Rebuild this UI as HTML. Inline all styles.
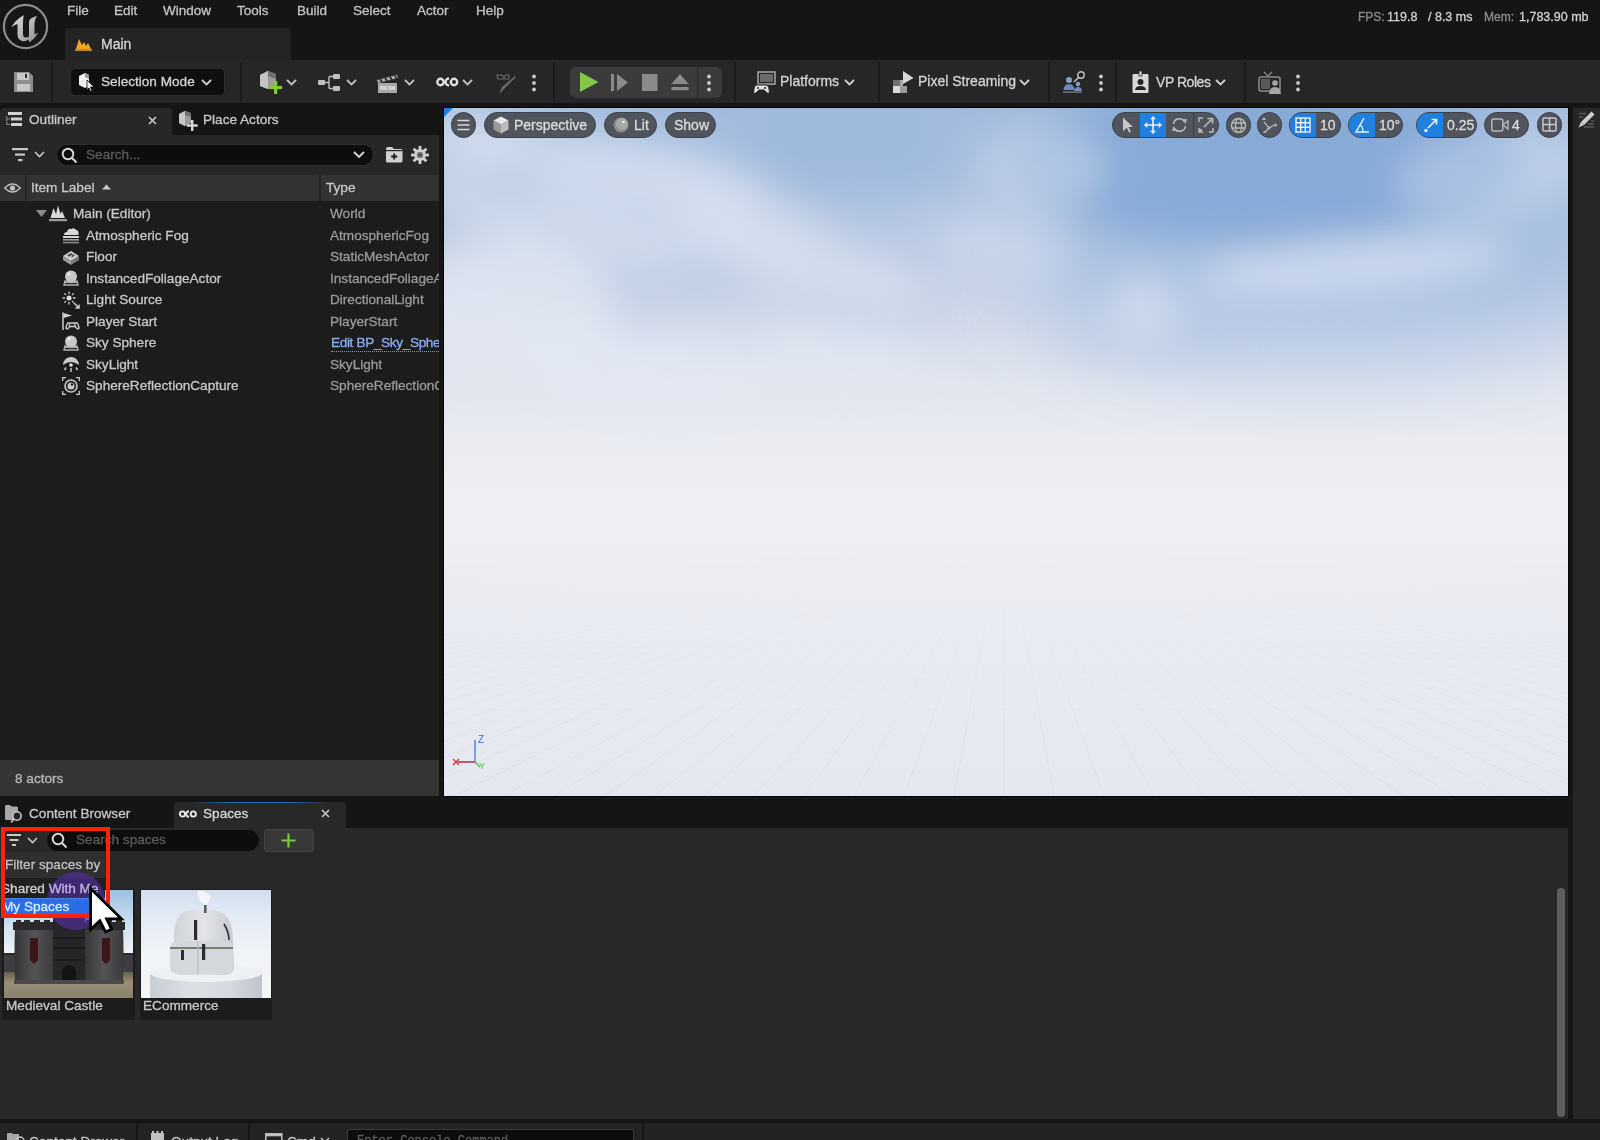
<!DOCTYPE html>
<html><head><meta charset="utf-8">
<style>
*{box-sizing:border-box;margin:0;padding:0}
html,body{width:1600px;height:1140px;overflow:hidden;background:#151515;font-family:"Liberation Sans",sans-serif;color:#c0c0c0}
.a{position:absolute}
.t{position:absolute;white-space:nowrap;line-height:1;-webkit-text-stroke:0.3px currentColor;will-change:transform}
svg{position:absolute;overflow:visible}
</style></head><body>

<!-- ===== MENU BAR ===== -->
<div class="a" style="left:0;top:0;width:1600px;height:60px;background:#151515"></div>
<!-- UE logo -->
<svg style="left:2px;top:3px" width="47" height="47" viewBox="0 0 47 47">
  <defs><linearGradient id="ug" x1="0" y1="0" x2="1" y2="1"><stop offset="0" stop-color="#dcdcdc"/><stop offset="0.55" stop-color="#b4b4b4"/><stop offset="1" stop-color="#8a8a8a"/></linearGradient></defs>
  <circle cx="23.5" cy="23.5" r="21.6" fill="#161616" stroke="#8c8c8c" stroke-width="2.2"/>
  <path d="M9.5 24.5 Q12 18.5 19.5 13.5 L22 12.3 Q21 15 21 19 V31 Q21 34.5 24 34.5 Q25.5 34.5 27 33.5 V19 Q27 17 29.5 15 L35 12.8 Q33 16 32.5 20 V31.5 L36.5 29.5 Q33 35.5 27.5 39.5 L26.5 36.5 Q23.5 39 20 38 Q15.5 36.5 15.5 31.5 V21 Q12 21.5 9.5 24.5 Z" fill="url(#ug)"/>
</svg>
<div class="t" style="left:67px;top:4px;font-size:13.5px;color:#c4c4c4">File</div>
<div class="t" style="left:114px;top:4px;font-size:13.5px;color:#c4c4c4">Edit</div>
<div class="t" style="left:163px;top:4px;font-size:13.5px;color:#c4c4c4">Window</div>
<div class="t" style="left:237px;top:4px;font-size:13.5px;color:#c4c4c4">Tools</div>
<div class="t" style="left:297px;top:4px;font-size:13.5px;color:#c4c4c4">Build</div>
<div class="t" style="left:353px;top:4px;font-size:13.5px;color:#c4c4c4">Select</div>
<div class="t" style="left:417px;top:4px;font-size:13.5px;color:#c4c4c4">Actor</div>
<div class="t" style="left:476px;top:4px;font-size:13.5px;color:#c4c4c4">Help</div>

<!-- FPS -->
<div class="t" style="left:1358px;top:11px;font-size:12px;color:#8c8c8c">FPS:</div>
<div class="t" style="left:1387px;top:11px;font-size:12.5px;color:#d2d2d2">119.8</div>
<div class="t" style="left:1428px;top:11px;font-size:12.5px;color:#d2d2d2">/ 8.3 ms</div>
<div class="t" style="left:1484px;top:11px;font-size:12px;color:#8c8c8c">Mem:</div>
<div class="t" style="left:1519px;top:11px;font-size:12.5px;color:#d2d2d2">1,783.90 mb</div>

<!-- Main tab -->
<div class="a" style="left:65px;top:28px;width:226px;height:33px;background:#242424;border-radius:4px 4px 0 0"></div>
<svg style="left:74px;top:37px" width="20" height="16" viewBox="0 0 20 16">
  <path d="M2 12 L5 2 L8 8 L10 5 L12 9 L14 6 L17 12 Z" fill="#f2a81c"/>
  <rect x="1" y="12" width="17" height="2" fill="#b98a3a"/>
</svg>
<div class="t" style="left:101px;top:37px;font-size:14px;color:#d6d6d6">Main</div>

<!-- ===== TOOLBAR ===== -->
<div class="a" style="left:0;top:60px;width:1600px;height:43px;background:#262626"></div>
<!-- separators -->
<div class="a" style="left:51px;top:62px;width:2px;height:40px;background:#1b1b1b"></div>
<div class="a" style="left:240px;top:62px;width:2px;height:40px;background:#1b1b1b"></div>
<div class="a" style="left:553px;top:62px;width:2px;height:40px;background:#1b1b1b"></div>
<div class="a" style="left:734px;top:62px;width:2px;height:40px;background:#1b1b1b"></div>
<div class="a" style="left:878px;top:62px;width:2px;height:40px;background:#1b1b1b"></div>
<div class="a" style="left:1048px;top:62px;width:2px;height:40px;background:#1b1b1b"></div>
<div class="a" style="left:1115px;top:62px;width:2px;height:40px;background:#1b1b1b"></div>
<div class="a" style="left:1244px;top:62px;width:2px;height:40px;background:#1b1b1b"></div>
<!-- save -->
<svg style="left:14px;top:72px" width="20" height="20" viewBox="0 0 20 20">
  <path d="M0 0 H15 L19 4 V20 H0 Z" fill="#8e8e8e"/>
  <rect x="3" y="1" width="12" height="7" fill="#c8c8c8"/>
  <rect x="11" y="2" width="2" height="4" fill="#333"/>
  <rect x="3" y="12" width="13" height="7" fill="#c8c8c8"/>
</svg>
<!-- selection mode -->
<div class="a" style="left:70px;top:68px;width:155px;height:28px;background:#0f0f0f;border-radius:5px;border:1px solid #2c2c2c"></div>
<svg style="left:78px;top:73px" width="18" height="19" viewBox="0 0 18 19">
  <path d="M1 3 L7 0 L11 2 L11 13 L7 15 L1 12 Z" fill="#f0f0f0"/>
  <path d="M7 0 L11 2 L11 6 L7 4 Z" fill="#9a9a9a"/>
  <path d="M9 7 L16 14 L12.5 14 L14 18 L12.5 18.6 L11 15 L9 17 Z" fill="#f0f0f0" stroke="#0f0f0f" stroke-width="0.8"/>
</svg>
<div class="t" style="left:101px;top:74.5px;font-size:13.6px;color:#d4d4d4">Selection Mode</div>
<svg style="left:201px;top:79px" width="11" height="7" viewBox="0 0 11 7"><path d="M1 1 L5.5 5.5 L10 1" fill="none" stroke="#d0d0d0" stroke-width="1.8"/></svg>

<!-- place actors -->
<svg style="left:259px;top:71px" width="24" height="23" viewBox="0 0 24 23">
  <path d="M1 4 L9 0 L17 3 L17 14 L9 18 L1 15 Z" fill="#9c9c9c"/>
  <path d="M1 4 L9 0 L9 18 L1 15 Z" fill="#c4c4c4"/>
  <path d="M9 0 L17 3 L17 8 L9 5 Z" fill="#6e6e6e"/>
  <rect x="15" y="10" width="3.2" height="13" fill="#7ccc3c"/>
  <rect x="10.1" y="14.9" width="13" height="3.2" fill="#7ccc3c"/>
</svg>
<svg style="left:286px;top:79px" width="11" height="7" viewBox="0 0 11 7"><path d="M1 1 L5.5 5.5 L10 1" fill="none" stroke="#c0c0c0" stroke-width="1.8"/></svg>
<!-- hierarchy -->
<svg style="left:318px;top:74px" width="23" height="17" viewBox="0 0 23 17">
  <rect x="0" y="6" width="7" height="5" rx="1" fill="#c0c0c0"/>
  <rect x="15" y="0" width="7" height="5" rx="1" fill="#c0c0c0"/>
  <rect x="15" y="12" width="7" height="5" rx="1" fill="#c0c0c0"/>
  <path d="M7 8.5 H11 M11 2.5 V14.5 M11 2.5 H15 M11 14.5 H15" stroke="#c0c0c0" stroke-width="1.4" fill="none"/>
</svg>
<svg style="left:346px;top:79px" width="11" height="7" viewBox="0 0 11 7"><path d="M1 1 L5.5 5.5 L10 1" fill="none" stroke="#c0c0c0" stroke-width="1.8"/></svg>
<!-- clapper -->
<svg style="left:377px;top:71px" width="22" height="22" viewBox="0 0 22 22">
  <path d="M0 9 L20 4 L21 7 L1 12 Z" fill="#a8a8a8"/>
  <path d="M3 8 L5 11 M8 7 L10 10 M13 6 L15 9 M18 5 L20 8" stroke="#242424" stroke-width="1.5"/>
  <rect x="1" y="12" width="19" height="10" fill="#a8a8a8"/>
  <rect x="3" y="15" width="7" height="4" fill="#d0d0d0"/>
  <rect x="11" y="15" width="7" height="4" fill="#d0d0d0"/>
</svg>
<svg style="left:404px;top:79px" width="11" height="7" viewBox="0 0 11 7"><path d="M1 1 L5.5 5.5 L10 1" fill="none" stroke="#c0c0c0" stroke-width="1.8"/></svg>
<!-- oco -->
<svg style="left:436px;top:75px" width="23" height="14" viewBox="0 0 23 14">
  <circle cx="4.5" cy="7" r="3.2" fill="none" stroke="#e0e0e0" stroke-width="2.4"/>
  <path d="M13 3.5 A3.5 3.5 0 1 0 13 10.5" fill="none" stroke="#e0e0e0" stroke-width="2.4"/>
  <circle cx="18" cy="7" r="3.2" fill="none" stroke="#e0e0e0" stroke-width="2.4"/>
  <path d="M8 7 H10" stroke="#e0e0e0" stroke-width="2"/>
</svg>
<svg style="left:462px;top:79px" width="11" height="7" viewBox="0 0 11 7"><path d="M1 1 L5.5 5.5 L10 1" fill="none" stroke="#c0c0c0" stroke-width="1.8"/></svg>
<!-- brush -->
<svg style="left:496px;top:73px" width="22" height="20" viewBox="0 0 22 20">
  <path d="M1 2 H6 L8 4 L10 2 H13 V6 H9 L8 5 L7 6 H2 Z" fill="none" stroke="#6a6a6a" stroke-width="1.2"/>
  <path d="M20 4 L8 16 Q6 19 3 20 Q5 17 6 14 L19 3 Z" fill="#6a6a6a"/>
</svg>
<svg style="left:531px;top:74px" width="6" height="18" viewBox="0 0 6 18"><circle cx="3" cy="2.5" r="1.9" fill="#c8c8c8"/><circle cx="3" cy="9" r="1.9" fill="#c8c8c8"/><circle cx="3" cy="15.5" r="1.9" fill="#c8c8c8"/></svg>

<!-- play group -->
<div class="a" style="left:570px;top:67px;width:152px;height:31px;background:#3b3b3b;border-radius:6px"></div>
<div class="a" style="left:697px;top:67px;width:1px;height:31px;background:#2a2a2a"></div>
<svg style="left:580px;top:72px" width="19" height="20" viewBox="0 0 19 20"><path d="M0 0 L18.5 10 L0 20 Z" fill="#84c84a"/></svg>
<svg style="left:611px;top:74px" width="18" height="17" viewBox="0 0 18 17"><rect x="0" y="0" width="3" height="17" fill="#8a8a8a"/><path d="M6 0 L17 8.5 L6 17 Z" fill="#8a8a8a"/></svg>
<svg style="left:642px;top:74px" width="16" height="17" viewBox="0 0 16 17"><rect x="0" y="0" width="15.5" height="17" fill="#8a8a8a"/></svg>
<svg style="left:671px;top:74px" width="18" height="17" viewBox="0 0 18 17"><path d="M9 0 L17.5 10 H0.5 Z" fill="#8a8a8a"/><rect x="0.5" y="13" width="17" height="3.2" fill="#8a8a8a"/></svg>
<svg style="left:706px;top:74px" width="6" height="18" viewBox="0 0 6 18"><circle cx="3" cy="2.5" r="1.9" fill="#c8c8c8"/><circle cx="3" cy="9" r="1.9" fill="#c8c8c8"/><circle cx="3" cy="15.5" r="1.9" fill="#c8c8c8"/></svg>

<!-- platforms -->
<svg style="left:753px;top:72px" width="24" height="22" viewBox="0 0 24 22">
  <rect x="5" y="0" width="17" height="12" fill="none" stroke="#a0a0a0" stroke-width="1.6"/>
  <rect x="7" y="2" width="13" height="8" fill="#6a6a6a"/>
  <path d="M3 13 Q1 14 0.5 20 Q1 22 3 21 L6 18 H11 L14 21 Q16 22 16.5 20 Q16 14 14 13 Z" fill="#e0e0e0" stroke="#242424" stroke-width="1"/>
  <circle cx="5" cy="16" r="1" fill="#242424"/><circle cx="12" cy="16" r="1" fill="#242424"/>
</svg>
<div class="t" style="left:780px;top:74px;font-size:14px;color:#d4d4d4">Platforms</div>
<svg style="left:844px;top:79px" width="11" height="7" viewBox="0 0 11 7"><path d="M1 1 L5.5 5.5 L10 1" fill="none" stroke="#d0d0d0" stroke-width="1.8"/></svg>

<!-- pixel streaming -->
<svg style="left:893px;top:71px" width="21" height="22" viewBox="0 0 21 22">
  <path d="M10 0 L20.5 7 L10 13 Z" fill="#d8d8d8"/>
  <rect x="0" y="9" width="7" height="7" fill="#6e6e6e"/>
  <rect x="0" y="15" width="7" height="7" fill="#d8d8d8"/>
  <rect x="7" y="15" width="7" height="7" fill="#9a9a9a"/>
  <rect x="7" y="9" width="3" height="6" fill="#a8a8a8"/>
</svg>
<div class="t" style="left:918px;top:74px;font-size:14px;color:#d4d4d4">Pixel Streaming</div>
<svg style="left:1019px;top:79px" width="11" height="7" viewBox="0 0 11 7"><path d="M1 1 L5.5 5.5 L10 1" fill="none" stroke="#d0d0d0" stroke-width="1.8"/></svg>

<!-- multiuser -->
<svg style="left:1063px;top:71px" width="23" height="22" viewBox="0 0 23 22">
  <circle cx="6" cy="9" r="3" fill="#8aa0c8"/>
  <path d="M0.5 19 Q1 13 6 13 Q11 13 11.5 19 Z" fill="#6e8ac0"/>
  <circle cx="15" cy="13" r="2.2" fill="#8aa0c8"/>
  <path d="M11 20 Q11.5 16 15 16 Q18.5 16 19 20 Z" fill="#6e8ac0"/>
  <circle cx="18" cy="4" r="3.2" fill="none" stroke="#c8c8c8" stroke-width="1.4"/>
  <path d="M15.5 6.5 L11 11" stroke="#c8c8c8" stroke-width="1.4"/>
  <rect x="0" y="20.5" width="19" height="1.2" fill="#8a8a8a"/>
</svg>
<svg style="left:1098px;top:74px" width="6" height="18" viewBox="0 0 6 18"><circle cx="3" cy="2.5" r="1.9" fill="#c8c8c8"/><circle cx="3" cy="9" r="1.9" fill="#c8c8c8"/><circle cx="3" cy="15.5" r="1.9" fill="#c8c8c8"/></svg>

<!-- vp roles -->
<svg style="left:1132px;top:71px" width="17" height="22" viewBox="0 0 17 22">
  <rect x="0.5" y="3" width="16" height="19" rx="1" fill="#d8d8d8"/>
  <rect x="7" y="0" width="3" height="5" fill="#d8d8d8" stroke="#242424" stroke-width="0.8"/>
  <circle cx="8.5" cy="11" r="3" fill="#242424"/>
  <path d="M3 19 Q3.5 15 8.5 15 Q13.5 15 14 19 Z" fill="#242424"/>
</svg>
<div class="t" style="left:1156px;top:74.5px;font-size:14px;letter-spacing:-0.45px;color:#d4d4d4">VP Roles</div>
<svg style="left:1215px;top:79px" width="11" height="7" viewBox="0 0 11 7"><path d="M1 1 L5.5 5.5 L10 1" fill="none" stroke="#d0d0d0" stroke-width="1.8"/></svg>

<!-- tv -->
<svg style="left:1258px;top:71px" width="24" height="23" viewBox="0 0 24 23">
  <path d="M6 1 L10 5 L14 1" fill="none" stroke="#8a8a8a" stroke-width="1.3"/>
  <rect x="1" y="6" width="21" height="14" rx="2" fill="none" stroke="#8a8a8a" stroke-width="1.6"/>
  <rect x="3" y="8" width="9" height="10" fill="#5a5a5a"/>
  <circle cx="17" cy="12" r="2.8" fill="#a8a8a8"/>
  <path d="M11 23 Q11.5 16 17 16 Q22.5 16 23 23 Z" fill="#a8a8a8"/>
</svg>
<svg style="left:1295px;top:74px" width="6" height="18" viewBox="0 0 6 18"><circle cx="3" cy="2.5" r="1.9" fill="#c8c8c8"/><circle cx="3" cy="9" r="1.9" fill="#c8c8c8"/><circle cx="3" cy="15.5" r="1.9" fill="#c8c8c8"/></svg>

<!-- ===== OUTLINER ===== -->
<div class="a" style="left:0;top:108px;width:439px;height:688px;background:#1c1c1c"></div>
<div class="a" style="left:0;top:108px;width:439px;height:27px;background:#151515"></div>
<div class="a" style="left:0;top:108px;width:172px;height:27px;background:#272727;border-radius:4px 4px 0 0"></div>
<svg style="left:6px;top:112px" width="16" height="16" viewBox="0 0 16 16">
  <rect x="2" y="0" width="14" height="3" fill="#d0d0d0"/>
  <rect x="5" y="5.5" width="11" height="3" fill="#d0d0d0"/>
  <rect x="5" y="11" width="11" height="3" fill="#d0d0d0"/>
  <path d="M0.8 4 V13 M0.8 7 H4 M0.8 12.5 H4" stroke="#8a8a8a" stroke-width="1" fill="none"/>
</svg>
<div class="t" style="left:29px;top:113px;font-size:13.6px;color:#c8c8c8">Outliner</div>
<svg style="left:148px;top:116px" width="9" height="9" viewBox="0 0 9 9"><path d="M1 1 L8 8 M8 1 L1 8" stroke="#c8c8c8" stroke-width="1.6"/></svg>
<svg style="left:178px;top:111px" width="21" height="20" viewBox="0 0 21 20">
  <path d="M1 3 L7 0 L13 2 L13 12 L7 15 L1 12 Z" fill="#9c9c9c"/>
  <path d="M1 3 L7 0 L7 15 L1 12 Z" fill="#c8c8c8"/>
  <path d="M7 0 L13 2 L13 6 L7 4 Z" fill="#707070"/>
  <rect x="13" y="9" width="2.4" height="11" fill="#d8d8d8"/>
  <rect x="8.7" y="13.3" width="11" height="2.4" fill="#d8d8d8"/>
</svg>
<div class="t" style="left:203px;top:113px;font-size:13.6px;color:#c8c8c8">Place Actors</div>

<div class="a" style="left:0;top:135px;width:439px;height:40px;background:#272727"></div>
<svg style="left:12px;top:148px" width="17" height="14" viewBox="0 0 17 14">
  <rect x="0" y="0" width="16" height="2.2" fill="#c8c8c8"/>
  <rect x="3" y="5.5" width="10" height="2.2" fill="#c8c8c8"/>
  <rect x="6" y="11" width="4.5" height="2.2" fill="#c8c8c8"/>
</svg>
<svg style="left:34px;top:151px" width="11" height="7" viewBox="0 0 11 7"><path d="M1 1 L5.5 5.5 L10 1" fill="none" stroke="#c8c8c8" stroke-width="1.6"/></svg>
<div class="a" style="left:56px;top:144px;width:318px;height:22px;background:#0d0d0d;border-radius:11px;border:1px solid #2e2e2e"></div>
<svg style="left:61px;top:147px" width="17" height="17" viewBox="0 0 17 17"><circle cx="7" cy="7" r="5.3" fill="none" stroke="#d8d8d8" stroke-width="1.9"/><path d="M11 11 L15.5 15.5" stroke="#d8d8d8" stroke-width="2"/></svg>
<div class="t" style="left:86px;top:147.5px;font-size:13.6px;color:#5c5c5c">Search...</div>
<svg style="left:353px;top:151px" width="12" height="8" viewBox="0 0 12 8"><path d="M1 1 L6 6 L11 1" fill="none" stroke="#d8d8d8" stroke-width="1.8"/></svg>
<svg style="left:386px;top:147px" width="17" height="16" viewBox="0 0 17 16">
  <path d="M0 2 Q0 0 2 0 H6 L8 2 H15 Q16.5 2 16.5 4 V14 Q16.5 15.5 15 15.5 H1.5 Q0 15.5 0 14 Z" fill="#d0d0d0"/>
  <rect x="0" y="3" width="16.5" height="1.2" fill="#262626"/>
  <path d="M8.2 6.5 V12.5 M5.2 9.5 H11.2" stroke="#1a1a1a" stroke-width="1.8"/>
</svg>
<svg style="left:411px;top:146px" width="18" height="18" viewBox="0 0 18 18">
  <g fill="#d0d0d0">
  <circle cx="9" cy="9" r="6"/>
  <rect x="7.6" y="0" width="2.8" height="18"/>
  <rect x="0" y="7.6" width="18" height="2.8"/>
  <rect x="7.6" y="0" width="2.8" height="18" transform="rotate(45 9 9)"/>
  <rect x="7.6" y="0" width="2.8" height="18" transform="rotate(-45 9 9)"/>
  </g>
  <circle cx="9" cy="9" r="3.2" fill="#7a7a7a"/>
  <circle cx="9" cy="9" r="1.6" fill="#444"/>
</svg>

<div class="a" style="left:0;top:175px;width:439px;height:26px;background:#333333"></div>
<div class="a" style="left:25px;top:175px;width:2px;height:26px;background:#262626"></div>
<div class="a" style="left:319px;top:175px;width:2px;height:26px;background:#262626"></div>
<svg style="left:4px;top:182px" width="17" height="12" viewBox="0 0 17 12"><path d="M0.8 6 Q8.5 -2 16.2 6 Q8.5 14 0.8 6 Z" fill="none" stroke="#c0c0c0" stroke-width="1.5"/><circle cx="8.5" cy="6" r="2.6" fill="#c0c0c0"/></svg>
<div class="t" style="left:31px;top:180.5px;font-size:13.6px;color:#c8c8c8">Item Label</div>
<svg style="left:102px;top:184px" width="9" height="6" viewBox="0 0 9 6"><path d="M0 5.5 L4.5 0.5 L9 5.5 Z" fill="#c8c8c8"/></svg>
<div class="t" style="left:326px;top:180.5px;font-size:13.6px;color:#c8c8c8">Type</div>

<!-- rows -->
<svg style="left:36px;top:210px" width="11" height="7" viewBox="0 0 11 7"><path d="M0 0 H11 L5.5 7 Z" fill="#8a8a8a"/></svg>
<svg style="left:49px;top:205px" width="18" height="17" viewBox="0 0 18 17">
  <path d="M1.5 13 L4.5 3 L7 9 L9 0.5 L11.5 9 L13 6 L16 13 Z" fill="#d8d8d8"/>
  <rect x="0" y="14" width="18" height="2.2" fill="#9a9a9a"/>
</svg>
<div class="t" style="left:73px;top:207px;font-size:13.6px;color:#c8c8c8">Main (Editor)</div>
<div class="t" style="left:330px;top:207px;font-size:13.6px;color:#9a9a9a">World</div>

<svg style="left:62px;top:226px" width="18" height="18" viewBox="0 0 18 18">
  <path d="M2 9 Q2 6 5 6 Q6 2 9.5 3 Q12 1 14 4 Q17 4 16.5 9 Z" fill="#d8d8d8"/>
  <rect x="1" y="10" width="16" height="2" fill="#d8d8d8"/>
  <rect x="1" y="13" width="16" height="1.6" fill="#a0a0a0"/>
  <rect x="1" y="15.8" width="16" height="1.6" fill="#888"/>
</svg>
<div class="t" style="left:86px;top:228.5px;font-size:13.6px;color:#c8c8c8">Atmospheric Fog</div>
<div class="t" style="left:330px;top:228.5px;font-size:13.6px;color:#9a9a9a">AtmosphericFog</div>

<svg style="left:62px;top:248px" width="18" height="18" viewBox="0 0 18 18">
  <path d="M1 8 L9 3 L17 8 L9 13 Z" fill="#d0d0d0"/>
  <path d="M1 8 V12 L9 17 V13 Z" fill="#9a9a9a"/>
  <path d="M17 8 V12 L9 17 V13 Z" fill="#7a7a7a"/>
  <path d="M5 7.5 L9 5 L11 6.2 L7 8.7 Z M9 10 L13 7.5 L11 6.2" fill="#444"/>
</svg>
<div class="t" style="left:86px;top:250px;font-size:13.6px;color:#c8c8c8">Floor</div>
<div class="t" style="left:330px;top:250px;font-size:13.6px;color:#9a9a9a">StaticMeshActor</div>

<svg style="left:62px;top:269px" width="18" height="18" viewBox="0 0 18 18">
  <circle cx="9" cy="7.5" r="6" fill="#c8c8c8"/>
  <circle cx="7" cy="5" r="1.5" fill="#eee"/>
  <path d="M3 12 L2 16 H16 L15 12 Q9 15 3 12 Z" fill="none" stroke="#b0b0b0" stroke-width="1.4"/>
</svg>
<div class="t" style="left:86px;top:271.5px;font-size:13.6px;color:#c8c8c8">InstancedFoliageActor</div>
<div class="t" style="left:330px;top:271.5px;font-size:13.6px;color:#9a9a9a;width:109px;overflow:hidden">InstancedFoliageActor</div>

<svg style="left:62px;top:291px" width="18" height="18" viewBox="0 0 18 18">
  <circle cx="7" cy="7" r="2.5" fill="#e0e0e0"/>
  <path d="M7 0.5 V3 M7 11 V13.5 M0.5 7 H3 M11 7 H13.5 M2.4 2.4 L4 4 M10 10 L11.6 11.6 M11.6 2.4 L10 4 M2.4 11.6 L4 10" stroke="#d0d0d0" stroke-width="1.3"/>
  <path d="M12 12 L17 17 M17 13.5 V17 H13.5" stroke="#d0d0d0" stroke-width="1.5" fill="none"/>
</svg>
<div class="t" style="left:86px;top:293px;font-size:13.6px;color:#c8c8c8">Light Source</div>
<div class="t" style="left:330px;top:293px;font-size:13.6px;color:#9a9a9a">DirectionalLight</div>

<svg style="left:62px;top:312px" width="18" height="18" viewBox="0 0 18 18">
  <path d="M1 0.5 V18" stroke="#d0d0d0" stroke-width="1.5"/>
  <path d="M1.5 1 L10 3.5 L1.5 6 Z" fill="#d0d0d0"/>
  <path d="M6 11 Q5 11 4 16 Q4.5 17.5 6 16.5 L8 14.5 H13 L15 16.5 Q16.5 17.5 17 16 Q16 11 15 11 Z" fill="none" stroke="#d0d0d0" stroke-width="1.4"/>
  <circle cx="7.5" cy="13" r="0.9" fill="#d0d0d0"/><circle cx="13" cy="13" r="0.9" fill="#d0d0d0"/>
</svg>
<div class="t" style="left:86px;top:314.5px;font-size:13.6px;color:#c8c8c8">Player Start</div>
<div class="t" style="left:330px;top:314.5px;font-size:13.6px;color:#9a9a9a">PlayerStart</div>

<svg style="left:62px;top:334px" width="18" height="18" viewBox="0 0 18 18">
  <circle cx="9" cy="7.5" r="6" fill="#c8c8c8"/>
  <circle cx="7" cy="5" r="1.5" fill="#eee"/>
  <path d="M3 12 L2 16 H16 L15 12 Q9 15 3 12 Z" fill="none" stroke="#b0b0b0" stroke-width="1.4"/>
</svg>
<div class="t" style="left:86px;top:336px;font-size:13.6px;color:#c8c8c8">Sky Sphere</div>
<div class="t" style="left:331px;top:336px;font-size:13.6px;color:#86b0ee;letter-spacing:-0.35px;border-bottom:1px dotted #6a9ae0;padding-bottom:1px;width:108px;overflow:hidden">Edit BP_Sky_Sphere</div>

<svg style="left:62px;top:355px" width="18" height="18" viewBox="0 0 18 18">
  <path d="M1 10 A8 8 0 0 1 17 10 Q13 7 9 7 Q5 7 1 10 Z" fill="#c8c8c8"/>
  <circle cx="9" cy="10" r="1.8" fill="#e8e8e8"/>
  <path d="M9 13 V17 M4 12.5 L2.5 15 M14 12.5 L15.5 15" stroke="#c8c8c8" stroke-width="1.5"/>
</svg>
<div class="t" style="left:86px;top:357.5px;font-size:13.6px;color:#c8c8c8">SkyLight</div>
<div class="t" style="left:330px;top:357.5px;font-size:13.6px;color:#9a9a9a">SkyLight</div>

<svg style="left:62px;top:377px" width="18" height="18" viewBox="0 0 18 18">
  <path d="M0.7 4 V0.7 H4 M14 0.7 H17.3 V4 M17.3 14 V17.3 H14 M4 17.3 H0.7 V14" stroke="#c8c8c8" stroke-width="1.3" fill="none"/>
  <circle cx="9" cy="9" r="6" fill="none" stroke="#c8c8c8" stroke-width="1.6"/>
  <circle cx="9" cy="9" r="3.5" fill="#c8c8c8"/>
  <circle cx="10" cy="7.5" r="1.2" fill="#1a1a1a"/>
</svg>
<div class="t" style="left:86px;top:379px;font-size:13.6px;color:#c8c8c8">SphereReflectionCapture</div>
<div class="t" style="left:330px;top:379px;font-size:13.6px;color:#9a9a9a;width:109px;overflow:hidden">SphereReflectionCapture</div>

<!-- status -->
<div class="a" style="left:0;top:760px;width:439px;height:36px;background:#343434"></div>
<div class="t" style="left:15px;top:771.5px;font-size:13.6px;color:#b8b8b8">8 actors</div>

<!-- ===== VIEWPORT ===== -->
<svg style="left:444px;top:108px" width="1124" height="688" viewBox="0 0 1124 688">
<defs>
<linearGradient id="skyg" x1="0" y1="0" x2="0" y2="1">
<stop offset="0" stop-color="#a2bbdd"/><stop offset="0.12" stop-color="#afc3e0"/><stop offset="0.22" stop-color="#c0cde5"/><stop offset="0.32" stop-color="#d4dbea"/><stop offset="0.40" stop-color="#e1e5ee"/><stop offset="0.48" stop-color="#e9ebf1"/><stop offset="0.56" stop-color="#eeeff3"/><stop offset="0.62" stop-color="#edeff3"/><stop offset="0.78" stop-color="#e9ebf2"/><stop offset="1" stop-color="#e6e8f1"/>
</linearGradient>
<filter id="cblur" x="-20%" y="-20%" width="140%" height="140%"><feGaussianBlur stdDeviation="18"/></filter><filter id="cblur2" x="-30%" y="-30%" width="160%" height="160%"><feGaussianBlur stdDeviation="45"/></filter>
<clipPath id="vclip"><rect width="1124" height="688"/></clipPath>
</defs>
<rect width="1124" height="688" fill="url(#skyg)"/>
<g clip-path="url(#vclip)"><g filter="url(#cblur2)"><ellipse cx="880" cy="150" rx="300" ry="110" fill="#8cb0dc" opacity="0.45"/></g><g filter="url(#cblur)">
<ellipse cx="820" cy="55" rx="260" ry="80" transform="rotate(0 820 55)" fill="#78a0d3" opacity="0.62"/>
<ellipse cx="400" cy="50" rx="110" ry="45" transform="rotate(0 400 50)" fill="#8aaeda" opacity="0.3"/>
<ellipse cx="200" cy="150" rx="110" ry="30" transform="rotate(15 200 150)" fill="#a0bade" opacity="0.2"/>
<ellipse cx="150" cy="190" rx="90" ry="30" transform="rotate(12 150 190)" fill="#b0c4e2" opacity="0.15"/>
<ellipse cx="430" cy="210" rx="70" ry="30" transform="rotate(10 430 210)" fill="#b4c6e2" opacity="0.35"/>
<ellipse cx="700" cy="230" rx="90" ry="30" transform="rotate(0 700 230)" fill="#b4c6e3" opacity="0.3"/>
<ellipse cx="160" cy="55" rx="170" ry="32" transform="rotate(12 160 55)" fill="#e6ebf5" opacity="0.5"/>
<ellipse cx="110" cy="120" rx="140" ry="28" transform="rotate(15 110 120)" fill="#e6ebf5" opacity="0.45"/>
<ellipse cx="350" cy="150" rx="130" ry="30" transform="rotate(18 350 150)" fill="#e6ebf5" opacity="0.5"/>
<ellipse cx="60" cy="200" rx="110" ry="70" transform="rotate(0 60 200)" fill="#e6ebf5" opacity="0.65"/>
<ellipse cx="230" cy="100" rx="150" ry="45" transform="rotate(10 230 100)" fill="#e2e8f4" opacity="0.35"/>
<ellipse cx="200" cy="265" rx="120" ry="38" transform="rotate(5 200 265)" fill="#e6ebf5" opacity="0.55"/>
<ellipse cx="400" cy="250" rx="90" ry="35" transform="rotate(0 400 250)" fill="#e6ebf5" opacity="0.5"/>
<ellipse cx="600" cy="60" rx="60" ry="45" transform="rotate(0 600 60)" fill="#e6ebf5" opacity="0.4"/>
<ellipse cx="560" cy="140" rx="70" ry="30" transform="rotate(10 560 140)" fill="#e6ebf5" opacity="0.35"/>
<ellipse cx="910" cy="158" rx="160" ry="26" transform="rotate(-5 910 158)" fill="#e6ebf5" opacity="0.55"/>
<ellipse cx="700" cy="200" rx="35" ry="35" transform="rotate(0 700 200)" fill="#e6ebf5" opacity="0.45"/>
<ellipse cx="1050" cy="65" rx="100" ry="45" transform="rotate(-10 1050 65)" fill="#e6ebf5" opacity="0.35"/>
<ellipse cx="20" cy="40" rx="60" ry="40" transform="rotate(0 20 40)" fill="#e6ebf5" opacity="0.4"/>
</g></g>
</svg>
<svg style="left:444px;top:108px" width="1124" height="688" viewBox="0 0 1124 688"><defs><linearGradient id="gf2" x1="0" y1="414" x2="0" y2="688" gradientUnits="userSpaceOnUse"><stop offset="0" stop-color="#000"/><stop offset="0.12" stop-color="#000"/><stop offset="0.35" stop-color="#333"/><stop offset="1" stop-color="#fff"/></linearGradient><mask id="gm"><rect x="0" y="414" width="1124" height="274" fill="url(#gf2)"/></mask></defs><g mask="url(#gm)"><path d="M560 414 L-2440 688 M560 414 L-2390 688 M560 414 L-2340 688 M560 414 L-2290 688 M560 414 L-2240 688 M560 414 L-2190 688 M560 414 L-2140 688 M560 414 L-2090 688 M560 414 L-2040 688 M560 414 L-1990 688 M560 414 L-1940 688 M560 414 L-1890 688 M560 414 L-1840 688 M560 414 L-1790 688 M560 414 L-1740 688 M560 414 L-1690 688 M560 414 L-1640 688 M560 414 L-1590 688 M560 414 L-1540 688 M560 414 L-1490 688 M560 414 L-1440 688 M560 414 L-1390 688 M560 414 L-1340 688 M560 414 L-1290 688 M560 414 L-1240 688 M560 414 L-1190 688 M560 414 L-1140 688 M560 414 L-1090 688 M560 414 L-1040 688 M560 414 L-990 688 M560 414 L-940 688 M560 414 L-890 688 M560 414 L-840 688 M560 414 L-790 688 M560 414 L-740 688 M560 414 L-690 688 M560 414 L-640 688 M560 414 L-590 688 M560 414 L-540 688 M560 414 L-490 688 M560 414 L-440 688 M560 414 L-390 688 M560 414 L-340 688 M560 414 L-290 688 M560 414 L-240 688 M560 414 L-190 688 M560 414 L-140 688 M560 414 L-90 688 M560 414 L-40 688 M560 414 L10 688 M560 414 L60 688 M560 414 L110 688 M560 414 L160 688 M560 414 L210 688 M560 414 L260 688 M560 414 L310 688 M560 414 L360 688 M560 414 L410 688 M560 414 L460 688 M560 414 L510 688 M560 414 L560 688 M560 414 L610 688 M560 414 L660 688 M560 414 L710 688 M560 414 L760 688 M560 414 L810 688 M560 414 L860 688 M560 414 L910 688 M560 414 L960 688 M560 414 L1010 688 M560 414 L1060 688 M560 414 L1110 688 M560 414 L1160 688 M560 414 L1210 688 M560 414 L1260 688 M560 414 L1310 688 M560 414 L1360 688 M560 414 L1410 688 M560 414 L1460 688 M560 414 L1510 688 M560 414 L1560 688 M560 414 L1610 688 M560 414 L1660 688 M560 414 L1710 688 M560 414 L1760 688 M560 414 L1810 688 M560 414 L1860 688 M560 414 L1910 688 M560 414 L1960 688 M560 414 L2010 688 M560 414 L2060 688 M560 414 L2110 688 M560 414 L2160 688 M560 414 L2210 688 M560 414 L2260 688 M560 414 L2310 688 M560 414 L2360 688 M560 414 L2410 688 M560 414 L2460 688 M560 414 L2510 688 M560 414 L2560 688 M560 414 L2610 688 M560 414 L2660 688 M560 414 L2710 688 M560 414 L2760 688 M560 414 L2810 688 M560 414 L2860 688 M560 414 L2910 688 M560 414 L2960 688 M560 414 L3010 688 M560 414 L3060 688 M560 414 L3110 688 M560 414 L3160 688 M560 414 L3210 688 M560 414 L3260 688 M560 414 L3310 688 M560 414 L3360 688 M560 414 L3410 688 M560 414 L3460 688 M560 414 L3510 688 M560 414 L3560 688" stroke="#b4b8c8" stroke-width="0.9" fill="none" opacity="0.2"/><path d="M0 686.7 H1124 M0 664.0 H1124 M0 644.8 H1124 M0 628.3 H1124 M0 614.0 H1124 M0 601.5 H1124 M0 590.5 H1124 M0 580.7 H1124 M0 571.9 H1124 M0 564.0 H1124 M0 556.9 H1124 M0 550.4 H1124 M0 544.4 H1124 M0 539.0 H1124 M0 534.0 H1124 M0 529.4 H1124 M0 525.1 H1124 M0 521.1 H1124 M0 517.4 H1124 M0 514.0 H1124 M0 510.8 H1124 M0 507.8 H1124 M0 504.9 H1124 M0 502.2 H1124 M0 499.7 H1124 M0 497.3 H1124 M0 495.1 H1124 M0 492.9 H1124 M0 490.9 H1124 M0 489.0 H1124 M0 487.2 H1124 M0 485.4 H1124 M0 483.8 H1124 M0 482.2 H1124 M0 480.7 H1124 M0 479.2 H1124 M0 477.8 H1124 M0 476.5 H1124 M0 475.2 H1124 M0 474.0 H1124 M0 472.8 H1124 M0 471.7 H1124 M0 470.6 H1124 M0 469.6 H1124 M0 468.5 H1124 M0 467.6 H1124 M0 466.6 H1124 M0 465.7 H1124 M0 464.8 H1124 M0 464.0 H1124 M0 463.2 H1124 M0 462.4 H1124 M0 461.6 H1124 M0 460.9 H1124 M0 460.2 H1124 M0 459.5 H1124 M0 458.8 H1124 M0 458.1 H1124 M0 457.5 H1124 M0 456.9 H1124 M0 456.3 H1124 M0 455.7 H1124 M0 455.1 H1124 M0 454.5 H1124 M0 454.0 H1124 M0 453.5 H1124 M0 453.0 H1124 M0 452.5 H1124 M0 452.0 H1124 M0 451.5 H1124 M0 451.0 H1124 M0 450.6 H1124 M0 450.1 H1124 M0 449.7 H1124 M0 449.3 H1124 M0 448.9 H1124 M0 448.5 H1124 M0 448.1 H1124 M0 447.7 H1124 M0 447.3 H1124 M0 447.0 H1124 M0 446.6 H1124 M0 446.3 H1124 M0 445.9 H1124 M0 445.6 H1124 M0 445.2 H1124 M0 444.9 H1124 M0 444.6 H1124 M0 444.3 H1124 M0 444.0 H1124 M0 443.7 H1124 M0 443.4 H1124 M0 443.1 H1124 M0 442.8 H1124 M0 442.6 H1124 M0 442.3 H1124 M0 442.0 H1124 M0 441.8 H1124 M0 441.5 H1124 M0 441.3 H1124 M0 441.0 H1124 M0 440.8 H1124 M0 440.5 H1124 M0 440.3 H1124 M0 440.1 H1124 M0 439.9 H1124 M0 439.6 H1124 M0 439.4 H1124 M0 439.2 H1124 M0 439.0 H1124 M0 438.8 H1124 M0 438.6 H1124 M0 438.4 H1124 M0 438.2 H1124 M0 438.0 H1124 M0 437.8 H1124 M0 437.6 H1124 M0 437.4 H1124 M0 437.3 H1124 M0 437.1 H1124 M0 436.9 H1124 M0 436.7 H1124 M0 436.6 H1124 M0 436.4 H1124 M0 436.2 H1124 M0 436.1 H1124 M0 435.9 H1124 M0 435.7 H1124 M0 435.6 H1124 M0 435.4 H1124 M0 435.3 H1124 M0 435.1 H1124 M0 435.0 H1124 M0 434.8 H1124 M0 434.7 H1124 M0 434.5 H1124 M0 434.4 H1124 M0 434.3 H1124 M0 434.1 H1124 M0 434.0 H1124 M0 433.9 H1124 M0 433.7 H1124 M0 433.6 H1124 M0 433.5 H1124 M0 433.4 H1124 M0 433.2 H1124 M0 433.1 H1124 M0 433.0 H1124 M0 432.9 H1124 M0 432.8 H1124 M0 432.6 H1124 M0 432.5 H1124 M0 432.4 H1124 M0 432.3 H1124 M0 432.2 H1124 M0 432.1 H1124 M0 432.0 H1124 M0 431.9 H1124 M0 431.8 H1124 M0 431.6 H1124 M0 431.5 H1124 M0 431.4 H1124 M0 431.3 H1124 M0 431.2 H1124 M0 431.1 H1124 M0 431.0 H1124 M0 430.9 H1124 M0 430.9 H1124 M0 430.8 H1124 M0 430.7 H1124 M0 430.6 H1124 M0 430.5 H1124 M0 430.4 H1124 M0 430.3 H1124 M0 430.2 H1124 M0 430.1 H1124 M0 430.0 H1124 M0 430.0 H1124 M0 429.9 H1124 M0 429.8 H1124 M0 429.7 H1124 M0 429.6 H1124 M0 429.5 H1124 M0 429.5 H1124 M0 429.4 H1124 M0 429.3 H1124 M0 429.2 H1124 M0 429.2 H1124 M0 429.1 H1124 M0 429.0 H1124 M0 428.9 H1124 M0 428.9 H1124 M0 428.8 H1124 M0 428.7 H1124 M0 428.6 H1124 M0 428.6 H1124 M0 428.5 H1124" stroke="#b4b8c8" stroke-width="0.7" fill="none" opacity="0.08"/></g></svg>
<div class="a" style="left:443px;top:107px;width:1126px;height:690px;border:1px solid #070707"></div>
<svg style="left:444px;top:108px" width="9" height="9" viewBox="0 0 9 9"><path d="M0 0 H9 L0 9 Z" fill="#1a80e6"/></svg>
<!-- left pills -->
<div class="a" style="left:451px;top:112px;width:25px;height:26px;border-radius:13px;background:#50545c;border:1px solid #3c4048"></div>
<svg style="left:457px;top:119px" width="13" height="12" viewBox="0 0 13 12"><path d="M0.5 1.5 H12.5 M0.5 6 H12.5 M0.5 10.5 H12.5" stroke="#d8d8d8" stroke-width="1.6"/></svg>
<div class="a" style="left:484px;top:112px;width:112px;height:26px;border-radius:13px;background:#50545c;border:1px solid #3c4048"></div>
<svg style="left:493px;top:116px" width="16" height="18" viewBox="0 0 16 18">
  <path d="M8 0.5 L15.5 4.5 L8 8.5 L0.5 4.5 Z" fill="#e8e8e8"/>
  <path d="M0.5 4.5 L8 8.5 V17.5 L0.5 13.5 Z" fill="#9a9a9a"/>
  <path d="M15.5 4.5 L8 8.5 V17.5 L15.5 13.5 Z" fill="#bcbcbc"/>
</svg>
<div class="t" style="left:514px;top:117.5px;font-size:14px;color:#dcdcdc">Perspective</div>
<div class="a" style="left:604px;top:112px;width:53px;height:26px;border-radius:13px;background:#50545c;border:1px solid #3c4048"></div>
<svg style="left:613px;top:117px" width="16" height="16" viewBox="0 0 16 16">
  <circle cx="8" cy="8" r="7.5" fill="#8c8c8c"/>
  <circle cx="9" cy="7" r="6" fill="#a8a8a8"/>
  <circle cx="10.5" cy="5" r="1.3" fill="#f0f0f0"/>
</svg>
<div class="t" style="left:634px;top:117.5px;font-size:14px;color:#dcdcdc">Lit</div>
<div class="a" style="left:665px;top:112px;width:51px;height:26px;border-radius:13px;background:#50545c;border:1px solid #3c4048"></div>
<div class="t" style="left:674px;top:117.5px;font-size:14px;color:#dcdcdc">Show</div>

<!-- right pills -->
<div class="a" style="left:1112px;top:112px;width:107px;height:26px;border-radius:13px;background:#50545c;border:1px solid #3c4048;overflow:hidden">
  <div class="a" style="left:27px;top:0;width:26px;height:24px;background:#1f80e0"></div>
  <div class="a" style="left:80px;top:0;width:1px;height:24px;background:#3a3d44"></div>
</div>
<svg style="left:1122px;top:117px" width="12" height="16" viewBox="0 0 12 16"><path d="M1 0.5 L11 10 H6.5 L9 15 L7.2 15.8 L4.8 10.8 L1 14 Z" fill="#c8c8c8"/></svg>
<svg style="left:1144px;top:116px" width="18" height="18" viewBox="0 0 18 18">
  <path d="M9 2 V16 M2 9 H16" stroke="#f0f0f0" stroke-width="1.6"/>
  <path d="M9 0 L12 3.2 H6 Z M9 18 L12 14.8 H6 Z M0 9 L3.2 6 V12 Z M18 9 L14.8 6 V12 Z" fill="#f0f0f0"/>
</svg>
<svg style="left:1171px;top:117px" width="17" height="16" viewBox="0 0 17 16">
  <path d="M2.5 7 A6 6 0 0 1 13.5 4.5" fill="none" stroke="#b8b8b8" stroke-width="1.6"/>
  <path d="M14.5 9 A6 6 0 0 1 3.5 11.5" fill="none" stroke="#b8b8b8" stroke-width="1.6"/>
  <path d="M11 2.5 L16 2 L14.5 6.8 Z M6 13.5 L1 14 L2.5 9.2 Z" fill="#b8b8b8"/>
</svg>
<svg style="left:1198px;top:117px" width="16" height="16" viewBox="0 0 16 16">
  <path d="M1 5 V1 H5 M11 15 H15 V11 M1 11 V15 H5" stroke="#b8b8b8" stroke-width="1.5" fill="none"/>
  <path d="M6 10 L14 2 M9.5 1.5 H14.5 V6.5" stroke="#b8b8b8" stroke-width="1.7" fill="none"/>
  <rect x="1" y="12" width="3" height="3" fill="#b8b8b8"/>
</svg>
<div class="a" style="left:1226px;top:112px;width:25px;height:26px;border-radius:13px;background:#50545c;border:1px solid #3c4048"></div>
<svg style="left:1230px;top:117px" width="17" height="17" viewBox="0 0 17 17">
  <circle cx="8.5" cy="8.5" r="7" fill="none" stroke="#b8b8b8" stroke-width="1.4"/>
  <ellipse cx="8.5" cy="8.5" rx="3" ry="7" fill="none" stroke="#b8b8b8" stroke-width="1.3"/>
  <path d="M1.5 6 H15.5 M1.5 11 H15.5" stroke="#b8b8b8" stroke-width="1.3"/>
</svg>
<div class="a" style="left:1257px;top:112px;width:25px;height:26px;border-radius:13px;background:#50545c;border:1px solid #3c4048"></div>
<svg style="left:1261px;top:116px" width="17" height="17" viewBox="0 0 17 17">
  <path d="M3 6 L8 12 L13 9 M8 12 L4 16" stroke="#b8b8b8" stroke-width="1.3" fill="none"/>
  <path d="M3 1 L5 4 H1 Z M14 7 L16.5 9.5 L13 11 Z M3 15 L6 16.5 L2 17 Z" fill="#b8b8b8"/>
  <circle cx="8" cy="12" r="1.5" fill="#b8b8b8"/>
</svg>
<div class="a" style="left:1289px;top:112px;width:52px;height:26px;border-radius:13px;background:#50545c;border:1px solid #3c4048;overflow:hidden">
  <div class="a" style="left:0;top:0;width:26px;height:24px;background:#1f80e0"></div>
</div>
<svg style="left:1295px;top:117px" width="16" height="16" viewBox="0 0 16 16">
  <rect x="1" y="1" width="14" height="14" fill="none" stroke="#f0f0f0" stroke-width="1.4"/>
  <path d="M5.7 1 V15 M10.3 1 V15 M1 5.7 H15 M1 10.3 H15" stroke="#f0f0f0" stroke-width="1.4"/>
</svg>
<div class="t" style="left:1320px;top:117.5px;font-size:14px;color:#dcdcdc">10</div>
<div class="a" style="left:1348px;top:112px;width:55px;height:26px;border-radius:13px;background:#50545c;border:1px solid #3c4048;overflow:hidden">
  <div class="a" style="left:0;top:0;width:26px;height:24px;background:#1f80e0"></div>
</div>
<svg style="left:1354px;top:117px" width="16" height="16" viewBox="0 0 16 16"><path d="M10 1 L2 15 H15" stroke="#f0f0f0" stroke-width="1.5" fill="none"/><path d="M6 8 Q9 10 9 15" stroke="#f0f0f0" stroke-width="1.3" fill="none"/></svg>
<div class="t" style="left:1379px;top:117.5px;font-size:14px;color:#dcdcdc">10°</div>
<div class="a" style="left:1416px;top:112px;width:61px;height:26px;border-radius:13px;background:#50545c;border:1px solid #3c4048;overflow:hidden">
  <div class="a" style="left:0;top:0;width:26px;height:24px;background:#1f80e0"></div>
</div>
<svg style="left:1423px;top:117px" width="16" height="16" viewBox="0 0 16 16"><path d="M5 11 L13 3 M8.5 2.5 H13.5 V7.5" stroke="#f0f0f0" stroke-width="1.7" fill="none"/><rect x="1.5" y="12" width="3" height="3" fill="#f0f0f0"/></svg>
<div class="t" style="left:1447px;top:117.5px;font-size:14px;color:#dcdcdc">0.25</div>
<div class="a" style="left:1484px;top:112px;width:45px;height:26px;border-radius:13px;background:#50545c;border:1px solid #3c4048"></div>
<svg style="left:1491px;top:118px" width="18" height="14" viewBox="0 0 18 14"><rect x="0.8" y="1" width="11" height="12" rx="1.5" fill="none" stroke="#b8b8b8" stroke-width="1.5"/><path d="M12 7 L17 3 V11 Z" fill="none" stroke="#b8b8b8" stroke-width="1.4"/></svg>
<div class="t" style="left:1512px;top:117.5px;font-size:14px;color:#dcdcdc">4</div>
<div class="a" style="left:1537px;top:112px;width:25px;height:26px;border-radius:13px;background:#50545c;border:1px solid #3c4048"></div>
<svg style="left:1542px;top:117px" width="15" height="15" viewBox="0 0 15 15"><rect x="1" y="1" width="13" height="13" rx="1" fill="none" stroke="#c8c8c8" stroke-width="1.5"/><path d="M7.5 1 V14 M1 7.5 H14" stroke="#c8c8c8" stroke-width="1.5"/></svg>

<!-- axis indicator -->
<svg style="left:450px;top:730px" width="40" height="40" viewBox="0 0 40 40">
  <path d="M25 10 V32 H7" stroke="#3a6ae0" stroke-width="1.2" fill="none"/>
  <path d="M25 32 H8" stroke="#d83030" stroke-width="1.3"/>
  <path d="M25 32 L30 37" stroke="#40c040" stroke-width="1.2"/>
  <path d="M3 29 L9 35 M9 29 L3 35" stroke="#e03030" stroke-width="1.3"/>
  <text x="28" y="13" font-family="Liberation Sans" font-size="10" fill="#3a6ae0">Z</text>
  <text x="29" y="39" font-family="Liberation Sans" font-size="9" fill="#40c040">Y</text>
</svg>

<!-- right narrow panel -->
<div class="a" style="left:1573px;top:108px;width:27px;height:1011px;background:#272727"></div>
<svg style="left:1576px;top:110px" width="20" height="20" viewBox="0 0 20 20">
  <path d="M3 11.5 H10 M3 15 H7 M15 19 H18 M12 22 H18 M8 25 H18" stroke="#5a5a5a" stroke-width="1.6" transform="translate(0 -8)"/>
  <path d="M15.5 1.5 L18.5 4.5 L8 15 L5 12 Z" fill="#cfcfcf"/>
  <path d="M5 12 L8 15 L2.5 17.5 Z" fill="#cfcfcf"/>
</svg>

<!-- ===== BOTTOM ===== -->
<div class="a" style="left:0;top:828px;width:1568px;height:291px;background:#282828"></div>
<!-- bottom tabs -->
<svg style="left:5px;top:805px" width="19" height="18" viewBox="0 0 19 18">
  <path d="M0 1.5 Q0 0 1.5 0 H5 L6.5 1.5 H12 Q13 1.5 13 3 V15 H1.5 Q0 15 0 13.5 Z" fill="#a8a8a8"/>
  <circle cx="12" cy="11" r="4.2" fill="#262626" stroke="#c8c8c8" stroke-width="1.6"/>
  <path d="M9 14 L6 17.5" stroke="#c8c8c8" stroke-width="1.8"/>
</svg>
<div class="t" style="left:29px;top:806.5px;font-size:13.6px;color:#c8c8c8">Content Browser</div>
<div class="a" style="left:174px;top:802px;width:172px;height:26px;background:#282828;border-radius:4px 4px 0 0"></div>
<div class="a" style="left:190px;top:802px;width:140px;height:1px;background:linear-gradient(90deg,rgba(40,100,180,0),#2a6cc0 30%,#2a6cc0 70%,rgba(40,100,180,0))"></div>
<svg style="left:179px;top:809px" width="18" height="10" viewBox="0 0 18 10">
  <circle cx="3.5" cy="5" r="2.6" fill="none" stroke="#e8e8e8" stroke-width="1.9"/>
  <path d="M10 2.2 A2.8 2.8 0 1 0 10 7.8" fill="none" stroke="#e8e8e8" stroke-width="1.9"/>
  <circle cx="14.3" cy="5" r="2.6" fill="none" stroke="#e8e8e8" stroke-width="1.9"/>
  <path d="M6 5 H8" stroke="#e8e8e8" stroke-width="1.6"/>
</svg>
<div class="t" style="left:203px;top:806.5px;font-size:13.6px;color:#d8d8d8">Spaces</div>
<svg style="left:321px;top:809px" width="9" height="9" viewBox="0 0 9 9"><path d="M1 1 L8 8 M8 1 L1 8" stroke="#c8c8c8" stroke-width="1.6"/></svg>

<!-- spaces toolbar -->
<svg style="left:7px;top:834px" width="14" height="13" viewBox="0 0 14 13">
  <rect x="0" y="0" width="14" height="2" fill="#c8c8c8"/>
  <rect x="2.5" y="5" width="9" height="2" fill="#c8c8c8"/>
  <rect x="5" y="10" width="4" height="2" fill="#c8c8c8"/>
</svg>
<svg style="left:27px;top:837px" width="11" height="7" viewBox="0 0 11 7"><path d="M1 1 L5.5 5.5 L10 1" fill="none" stroke="#c8c8c8" stroke-width="1.6"/></svg>
<div class="a" style="left:46px;top:829px;width:214px;height:23px;background:#0d0d0d;border-radius:11.5px;border:1px solid #2a2a2a"></div>
<svg style="left:51px;top:832px" width="17" height="17" viewBox="0 0 17 17"><circle cx="7" cy="7" r="5.3" fill="none" stroke="#d8d8d8" stroke-width="1.9"/><path d="M11 11 L15.5 15.5" stroke="#d8d8d8" stroke-width="2"/></svg>
<div class="t" style="left:76px;top:833px;font-size:13.6px;color:#5c5c5c">Search spaces</div>
<div class="a" style="left:264px;top:829px;width:50px;height:23px;background:#383838;border-radius:3px;border:1px solid #444"></div>
<svg style="left:281px;top:833px" width="15" height="15" viewBox="0 0 15 15"><path d="M7.5 0.5 V14.5 M0.5 7.5 H14.5" stroke="#7cc83c" stroke-width="2.2"/></svg>

<!-- thumbnails -->
<div class="a" style="left:2px;top:889px;width:133px;height:131px;background:#1c1c1c;border-radius:3px"></div>
<div class="a" style="left:140px;top:889px;width:132px;height:131px;background:#1c1c1c;border-radius:3px"></div>
<svg style="left:4px;top:890px" width="129" height="108" viewBox="0 0 129 108">
  <defs>
    <linearGradient id="csky" x1="0" y1="0" x2="0" y2="1"><stop offset="0" stop-color="#9cc0e4"/><stop offset="0.35" stop-color="#d4e4f2"/><stop offset="0.62" stop-color="#f2f5f8"/><stop offset="1" stop-color="#f4f6f8"/></linearGradient>
    <linearGradient id="cgr" x1="0" y1="0" x2="0" y2="1"><stop offset="0" stop-color="#6a604c"/><stop offset="0.4" stop-color="#9a8e76"/><stop offset="1" stop-color="#8a806c"/></linearGradient>
    <linearGradient id="ctw" x1="0" y1="0" x2="1" y2="0"><stop offset="0" stop-color="#353537"/><stop offset="0.5" stop-color="#545456"/><stop offset="1" stop-color="#3a3a3c"/></linearGradient>
  </defs>
  <rect width="129" height="108" fill="url(#csky)"/>
  <rect x="0" y="64" width="129" height="20" fill="#3e3e40"/>
  <path d="M0 64 H129" stroke="#2a2a2c" stroke-width="2"/>
  <rect x="0" y="82" width="129" height="26" fill="url(#cgr)"/>
  <path d="M11 38 H50 V92 H11 Q10 60 11 38 Z" fill="url(#ctw)"/>
  <path d="M80 38 H119 Q120 60 119 92 H80 Z" fill="url(#ctw)"/>
  <path d="M9 32 H52 V40 H9 Z" fill="#2a2a2c"/>
  <path d="M78 32 H121 V40 H78 Z" fill="#2a2a2c"/>
  <path d="M12 30 h5 v3 h-5 z M20 30 h6 v3 h-6 z M30 30 h6 v3 h-6 z M40 30 h6 v3 h-6 z M82 30 h6 v3 h-6 z M92 30 h6 v3 h-6 z M102 30 h6 v3 h-6 z M112 30 h6 v3 h-6 z" fill="#2a2a2c"/>
  <rect x="49" y="26" width="32" height="66" fill="#262628"/><path d="M48 24 h6 v3 h-6 z M58 24 h6 v3 h-6 z M68 24 h6 v3 h-6 z M76 24 h6 v3 h-6 z" fill="#262628"/>
  <path d="M49 48 H81 M49 58 H81 M49 70 H81" stroke="#1c1c1e" stroke-width="2"/>
  <path d="M26 48 H34 V70 L30 74 L26 70 Z" fill="#3a1616"/>
  <path d="M98 48 H106 V70 L102 74 L98 70 Z" fill="#3a1616"/>
  <path d="M58 92 V80 Q65 70 72 80 V92 Z" fill="#141416"/>
  <rect x="10" y="90" width="110" height="4" fill="#4a4a48"/>
</svg>
<svg style="left:141px;top:890px" width="130" height="108" viewBox="0 0 130 108">
  <defs>
    <linearGradient id="esky" x1="0" y1="0" x2="0" y2="1"><stop offset="0" stop-color="#d2def0"/><stop offset="0.25" stop-color="#e4ebf4"/><stop offset="0.6" stop-color="#f0f3f7"/><stop offset="1" stop-color="#f4f5f7"/></linearGradient>
    <linearGradient id="ecyl" x1="0" y1="0" x2="1" y2="0"><stop offset="0" stop-color="#c8ccd4"/><stop offset="0.35" stop-color="#dcdfe4"/><stop offset="0.7" stop-color="#d6d9df"/><stop offset="1" stop-color="#c0c4cc"/></linearGradient>
    <linearGradient id="ebag" x1="0" y1="0" x2="1" y2="0"><stop offset="0" stop-color="#cfd2d8"/><stop offset="0.5" stop-color="#e2e4e8"/><stop offset="1" stop-color="#c6c9d0"/></linearGradient>
  </defs>
  <rect width="130" height="108" fill="url(#esky)"/>
  <path d="M9 83 V108 H121 V83 Z" fill="url(#ecyl)"/>
  <ellipse cx="65" cy="83" rx="56" ry="9" fill="#eef0f3"/>
  <path d="M35 32 Q38 22 50 20 L72 20 Q84 21 89 32 Q92 40 92 52 L93 76 Q93 84 85 85 H40 Q32 84 32 76 L33 48 Q33 38 35 32 Z" fill="url(#ebag)"/>
  <path d="M29 60 Q29 52 36 51 H86 Q92 52 92 60 V76 Q92 84 84 84 H38 Q29 84 29 76 Z" fill="#d4d7dc"/>
  <path d="M29 58 H92" stroke="#5e6052" stroke-width="1.6"/>
  <path d="M57 51 V84" stroke="#b8bcc4" stroke-width="1.2"/>
  <rect x="53" y="30" width="3.2" height="20" fill="#2a2c30"/>
  <rect x="61" y="54" width="3.2" height="16" fill="#2a2c30"/>
  <rect x="40" y="60" width="3" height="10" fill="#2a2c30"/>
  <path d="M83 34 Q88 42 88 50" stroke="#2e3034" stroke-width="1.6" fill="none"/>
  <path d="M56 2 Q62 -1 70 6 L66 15 Q58 14 56 2 Z" fill="#f4f5f8"/>
  <rect x="63" y="15" width="2.6" height="8" fill="#5a5c62"/>
</svg>
<div class="t" style="left:5.5px;top:999px;font-size:13.6px;color:#c8c8c8">Medieval Castle</div>
<div class="t" style="left:143px;top:999px;font-size:13.6px;color:#c8c8c8">ECommerce</div>

<!-- dropdown -->
<div class="a" style="left:4px;top:852px;width:101px;height:26px;background:#2f2f2f"></div>
<div class="t" style="left:5px;top:858px;font-size:13.6px;color:#c0c0c0">Filter spaces by</div>
<div class="a" style="left:4px;top:878px;width:101px;height:20px;background:#1f1f1f"></div>
<div class="a" style="left:47px;top:872px;width:58px;height:58px;border-radius:50%;background:rgba(80,46,150,0.7)"></div>
<div class="a" style="left:4px;top:878px;width:101px;height:20px;overflow:hidden">
  <div class="t" style="left:-3px;top:4px;font-size:13.6px;color:#d0d0d0">Shared <span style="color:#c2b2e6">With Me</span></div>
</div>
<div class="a" style="left:4px;top:898px;width:86px;height:17px;overflow:hidden;background:#2a6ee6;border-top:1px dotted #6a9ae8">
  <div class="t" style="left:-2px;top:1px;font-size:13.6px;color:#d4ecff">My Spaces</div>
</div>
<div class="a" style="left:1px;top:827px;width:109px;height:91px;border:4px solid #ff2208"></div>
<svg style="left:87px;top:885px" width="42" height="52" viewBox="0 0 42 52">
  <path d="M3.6 3.4 L3.6 44.5 L12.8 35.8 L18.6 47 L24.6 44.2 L19.6 33.8 L34.4 33.8 Z" fill="#ffffff" stroke="#000" stroke-width="2.8" stroke-linejoin="miter"/>
</svg>

<!-- scrollbar -->
<div class="a" style="left:1557px;top:888px;width:8px;height:229px;border-radius:4px;background:#5e5e5e"></div>

<!-- status bar -->
<div class="a" style="left:0;top:1119px;width:1600px;height:4px;background:#151515"></div>
<div class="a" style="left:0;top:1123px;width:1600px;height:17px;background:#232323"></div>
<div class="a" style="left:136px;top:1123px;width:2px;height:17px;background:#161616"></div>
<div class="a" style="left:248px;top:1123px;width:2px;height:17px;background:#161616"></div>
<div class="a" style="left:642px;top:1123px;width:2px;height:17px;background:#161616"></div>
<svg style="left:7px;top:1133px" width="18" height="10" viewBox="0 0 18 10"><path d="M0 1 Q0 0 1 0 H5 L6 1 H12 V10 H0 Z" fill="#a8a8a8"/><circle cx="13" cy="8" r="4" fill="none" stroke="#c8c8c8" stroke-width="1.5"/></svg>
<div class="t" style="left:29px;top:1134.5px;font-size:13.6px;color:#c0c0c0">Content Drawer</div>
<svg style="left:151px;top:1131px" width="14" height="10" viewBox="0 0 14 10"><rect x="0" y="2" width="13" height="8" fill="#c0c0c0"/><rect x="1" y="0" width="2" height="3" fill="#c0c0c0"/><rect x="5.5" y="0" width="2" height="3" fill="#c0c0c0"/><rect x="10" y="0" width="2" height="3" fill="#c0c0c0"/></svg>
<div class="t" style="left:171px;top:1134.5px;font-size:13.6px;color:#c0c0c0">Output Log</div>
<svg style="left:265px;top:1133px" width="18" height="10" viewBox="0 0 18 10"><rect x="0.8" y="0.8" width="16" height="12" fill="none" stroke="#c0c0c0" stroke-width="1.5"/><rect x="0.8" y="0.8" width="16" height="2.5" fill="#c0c0c0"/></svg>
<div class="t" style="left:287px;top:1134.5px;font-size:13.6px;color:#c0c0c0">Cmd</div>
<svg style="left:320px;top:1137px" width="10" height="6" viewBox="0 0 10 6"><path d="M1 1 L5 5 L9 1" fill="none" stroke="#c0c0c0" stroke-width="1.5"/></svg>
<div class="a" style="left:347px;top:1129px;width:287px;height:20px;background:#0d0d0d;border:1px solid #3a3a3a;border-radius:2px"></div>
<div class="t" style="left:357px;top:1135px;font-family:'Liberation Mono',monospace;font-size:12px;color:#5a5a5a">Enter Console Command</div>

</body></html>
